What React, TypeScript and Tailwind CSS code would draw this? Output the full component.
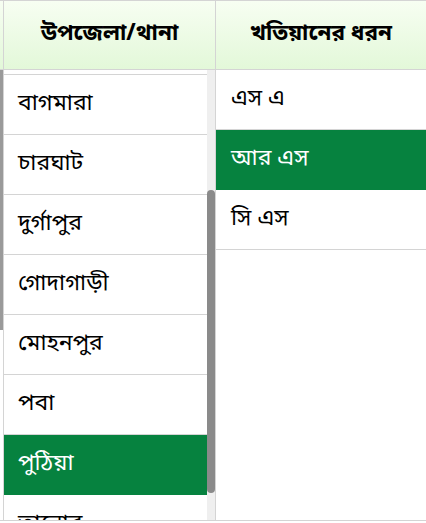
import { useLayoutEffect, useRef } from 'react';

const UPAZILAS = ['বোয়ালিয়া', 'মতিহার', 'বাঘা', 'বাগমারা', 'চারঘাট', 'দুর্গাপুর', 'গোদাগাড়ী', 'মোহনপুর', 'পবা', 'পুঠিয়া', 'তানোর'];
const KHATIAN = ['এস এ', 'আর এস', 'সি এস'];

export default function App() {
  const listRef = useRef<HTMLDivElement>(null);
  useLayoutEffect(() => {
    if (listRef.current) listRef.current.scrollTop = 175;
  }, []);

  const selectedUpazila = 'পুঠিয়া';
  const selectedKhatian = 'আর এস';

  return (
    <div className="w-[426px] h-[523px] bg-white overflow-hidden text-black"
      style={{ fontFamily: '"Noto Sans Bengali", "Nirmala UI", "Noto Sans", sans-serif' }}>
      <div className="border-t border-b border-[#d4d4d4] flex flex-col">
        {/* header */}
        <div className="flex h-[69px] border-b border-[#d4d4d4] bg-gradient-to-b from-[#f7fef2] to-[#e3f8d9]">
          <div className="w-[213px] border-l border-r border-[#d4d4d4] ml-[3px] flex items-center justify-center font-bold text-[22.5px]">
            উপজেলা/থানা
          </div>
          <div className="flex-1 flex items-center justify-center font-bold text-[22.5px]">
            খতিয়ানের ধরন
          </div>
        </div>

        {/* body */}
        <div className="flex h-[450px]">
          <div className="w-[3px] flex flex-col">
            <div className="h-[260px] bg-[#9a9a9a]"></div>
          </div>
          <div className="w-[213px] border-l border-r border-[#d4d4d4] flex">
            <div ref={listRef} className="flex-1 overflow-hidden">
              {UPAZILAS.map(u => (
                <div key={u}
                  className={`h-[60px] flex items-center pl-[14px] text-[23px] border-b ${u === selectedUpazila ? 'bg-[#06823f] text-white border-[#06823f]' : 'border-[#d4d4d4]'}`}>
                  {u}
                </div>
              ))}
            </div>
            {/* scrollbar */}
            <div className="w-[8px] bg-[#efefef] flex flex-col">
              <div className="h-[120px]"></div>
              <div className="h-[303px] bg-[#8a8a8a] rounded-[4px]"></div>
            </div>
          </div>
          <div className="flex-1">
            {KHATIAN.map(k => (
              <div key={k}
                className={`h-[60px] flex items-center pl-[15px] text-[23px] border-b ${k === selectedKhatian ? 'bg-[#06823f] text-white border-[#06823f]' : 'border-[#d4d4d4]'}`}>
                {k}
              </div>
            ))}
          </div>
        </div>
      </div>
    </div>
  );
}
